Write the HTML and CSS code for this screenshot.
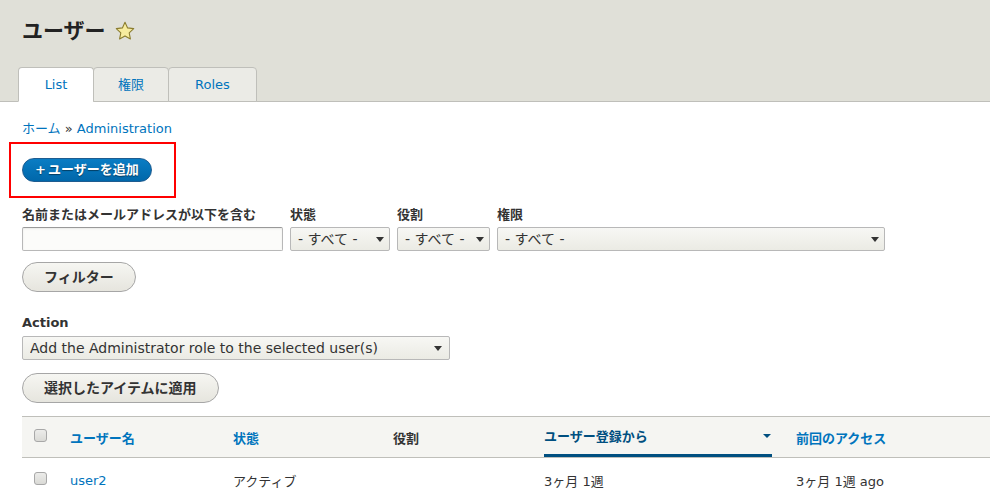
FILE: index.html
```html
<!DOCTYPE html>
<html lang="ja">
<head>
<meta charset="utf-8">
<title>ユーザー</title>
<link rel="stylesheet" href="styles.css">
</head>
<body>
<header class="header">
  <h1 class="title">ユーザー
    <svg class="star" width="20" height="20" viewBox="0 0 20 20" aria-hidden="true">
      <path d="M10 1.3l2.6 5.6 6.1.7-4.5 4.2 1.2 6.1L10 14.9l-5.4 3 1.2-6.1-4.5-4.2 6.1-.7z" fill="#f7ec9e" stroke="#8b7d2e" stroke-width="1.1" stroke-linejoin="round"/>
    </svg>
  </h1>
  <nav class="tabs">
    <a class="tab tab-list is-active" href="#">List</a>
    <a class="tab tab-perm" href="#">権限</a>
    <a class="tab tab-roles" href="#">Roles</a>
  </nav>
</header>
<main class="main">
  <div class="breadcrumb"><a href="#">ホーム</a> » <a href="#">Administration</a></div>
  <div class="highlight">
    <a class="btn-primary" href="#"><span class="plus">+</span>ユーザーを追加</a>
  </div>
  <form class="filters">
    <div class="field field-name">
      <label>名前またはメールアドレスが以下を含む</label>
      <input class="text" type="text">
    </div>
    <div class="field field-status">
      <label>状態</label>
      <span class="select"><select><option>- すべて -</option></select></span>
    </div>
    <div class="field field-role">
      <label>役割</label>
      <span class="select"><select><option>- すべて -</option></select></span>
    </div>
    <div class="field field-perm">
      <label>権限</label>
      <span class="select"><select><option>- すべて -</option></select></span>
    </div>
  </form>
  <button class="btn btn-filter" type="button">フィルター</button>
  <div class="action">
    <label>Action</label>
    <span class="select select-action"><select><option>Add the Administrator role to the selected user(s)</option></select></span>
  </div>
  <button class="btn btn-apply" type="button">選択したアイテムに適用</button>
  <table class="users">
    <colgroup>
      <col class="c1"><col class="c2"><col class="c3"><col class="c4"><col class="c5"><col>
    </colgroup>
    <thead>
      <tr>
        <th class="check"><input type="checkbox"></th>
        <th><a href="#">ユーザー名</a></th>
        <th><a href="#">状態</a></th>
        <th class="plain">役割</th>
        <th class="sorted"><div class="sorted-inner"><a href="#">ユーザー登録から</a><span class="sort-arrow"></span></div></th>
        <th><a href="#">前回のアクセス</a></th>
      </tr>
    </thead>
    <tbody>
      <tr>
        <td class="check"><input type="checkbox"></td>
        <td><a href="#">user2</a></td>
        <td>アクティブ</td>
        <td></td>
        <td>3ヶ月 1週</td>
        <td>3ヶ月 1週 ago</td>
      </tr>
    </tbody>
  </table>
</main>
</body>
</html>
```

FILE: styles.css
```css
html, body {
  margin: 0;
  padding: 0;
}
body {
  font-family: "DejaVu Sans", "Noto Sans CJK JP", sans-serif;
  font-size: 13px;
  color: #333;
  background: #fff;
  overflow: hidden;
}
a {
  color: #0074bd;
  text-decoration: none;
}

/* header */
.header {
  background: #e0e0d8;
  border-bottom: 1px solid #bfbfba;
  padding: 19px 0 0 18px;
}
.title {
  margin: 0 0 0 4px;
  font-size: 21px;
  line-height: 25px;
  font-weight: bold;
  color: #222;
  display: flex;
  align-items: center;
  gap: 9px;
}
.star {
  display: block;
  margin-top: -1px;
}
.tabs {
  display: flex;
  margin-top: 23px;
  margin-bottom: -1px;
}
.tab {
  display: block;
  height: 35px;
  box-sizing: border-box;
  padding: 0;
  text-align: center;
  line-height: 33px;
  background: #ebebe6;
  border: 1px solid #bfbfba;
  border-radius: 4px 4px 0 0;
  color: #0074bd;
  font-size: 13px;
}
.tab-list { width: 76px; }
.tab-perm { width: 76px; }
.tab-roles { width: 89px; }
.tab + .tab {
  margin-left: -1px;
}
.tab.is-active {
  background: #fff;
  border-bottom-color: #fff;
}

/* main */
.main {
  padding-left: 22px;
}
.breadcrumb {
  margin-top: 17px;
  line-height: 20px;
  color: #333;
}
.highlight {
  margin: 3px 0 0 -13px;
  width: 167px;
  height: 56px;
  box-sizing: border-box;
  border: 2px solid #f00;
  padding: 14px 0 0 11px;
}
.btn-primary {
  display: inline-block;
  box-sizing: border-box;
  height: 24px;
  padding: 2px 12px;
  line-height: 18px;
  font-weight: bold;
  font-size: 13px;
  color: #fff;
  background: linear-gradient(#0a7dc4, #0067aa);
  border: 1px solid #1e5c90;
  border-radius: 20px;
  text-shadow: 0 1px 1px rgba(0, 0, 0, .45);
}
.plus {
  margin-right: 2px;
}

/* filters */
.filters {
  display: flex;
  gap: 7px;
  margin: 8px 0 0;
}
.field {
  display: flex;
  flex-direction: column;
}
label {
  display: block;
  font-weight: bold;
  font-size: 13px;
  line-height: 18px;
  margin-bottom: 3px;
  color: #333;
}
.field-name { width: 261px; }
.field-status { width: 100px; }
.field-role { width: 93px; }
.field-perm { width: 388px; }

.text {
  box-sizing: border-box;
  width: 100%;
  height: 24px;
  margin: 0;
  border: 1px solid #b8b8b8;
  border-top-color: #999;
  border-radius: 2px;
  background: #fcfcfa;
  box-shadow: inset 0 1px 2px rgba(0, 0, 0, .08);
  font: 14px "DejaVu Sans", "Noto Sans CJK JP", sans-serif;
}
.select {
  position: relative;
  display: block;
  width: 100%;
  height: 24px;
}
.select select {
  -webkit-appearance: none;
  appearance: none;
  box-sizing: border-box;
  width: 100%;
  height: 24px;
  margin: 0;
  padding: 0 20px 0 7px;
  border: 1px solid #b8b8b8;
  border-radius: 2px;
  background: linear-gradient(#f7f7f4, #ebebe4);
  color: #333;
  font: 14px/22px "DejaVu Sans", "Noto Sans CJK JP", sans-serif;
}
.select::after {
  content: "";
  position: absolute;
  right: 6px;
  top: 10px;
  border-left: 4.5px solid transparent;
  border-right: 4.5px solid transparent;
  border-top: 5px solid #333;
  pointer-events: none;
}

.btn {
  display: block;
  box-sizing: border-box;
  height: 30px;
  padding: 4px 21px;
  font: bold 14px/20px "DejaVu Sans", "Noto Sans CJK JP", sans-serif;
  color: #333;
  background: linear-gradient(#f6f6f2, #e6e5de);
  border: 1px solid #a6a6a6;
  border-radius: 20em;
}
.btn-filter {
  margin-top: 11px;
}
.action {
  margin-top: 22px;
}
.action label {
  margin-bottom: 4px;
}
.select-action {
  width: 428px;
}
.select-action::after {
  right: 8px;
}
.btn-apply {
  margin-top: 13px;
}

/* table */
.users {
  margin-top: 13px;
  width: 100%;
  border-collapse: collapse;
  table-layout: fixed;
}
.c1 { width: 36px; }
.c2 { width: 163px; }
.c3 { width: 160px; }
.c4 { width: 151px; }
.c5 { width: 252px; }
.users thead tr {
  background: #f5f5f2;
  border-top: 1px solid #bfbfba;
  border-bottom: 1px solid #bfbfba;
}
.users th {
  height: 40px;
  padding: 0 12px;
  text-align: left;
  font-weight: bold;
  font-size: 13px;
  vertical-align: middle;
  color: #333;
}
.users th.sorted {
  vertical-align: bottom;
}
.sorted-inner {
  display: flex;
  justify-content: space-between;
  align-items: center;
  height: 37px;
  border-bottom: 3px solid #004f80;
}
.sorted-inner a {
  color: #004f80;
}
.sort-arrow {
  width: 0;
  height: 0;
  margin-right: 1px;
  border-left: 4px solid transparent;
  border-right: 4px solid transparent;
  border-top: 4px solid #004f80;
}
.users td {
  height: 44px;
  padding: 0 12px;
  vertical-align: middle;
  font-size: 13px;
}
.users .check {
  padding-right: 0;
}
input[type="checkbox"] {
  -webkit-appearance: none;
  appearance: none;
  display: block;
  width: 13px;
  height: 13px;
  margin: -3px 0 0;
  box-sizing: border-box;
  border: 1px solid #a8a8a8;
  border-radius: 3px;
  background: linear-gradient(#ececea, #dadad6);
}
```
